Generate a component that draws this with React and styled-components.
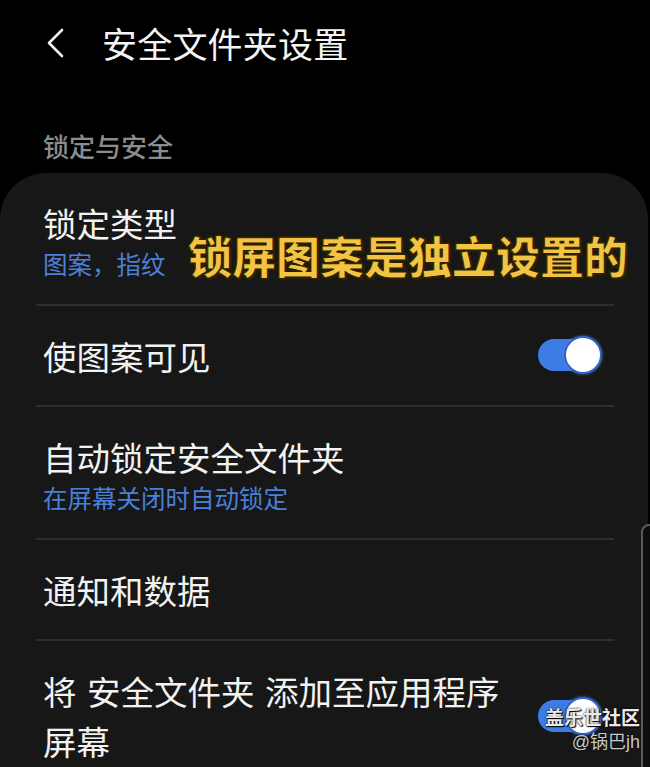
import styled, { createGlobalStyle } from "styled-components";

const GlobalStyle = createGlobalStyle`
	html, body {
		margin: 0;
		padding: 0;
		background: #000;
		height: 767px;
		overflow: hidden;
	}
	body {
		font-family: "Noto Sans CJK SC", "Noto Sans", sans-serif;
		color: #f2f2f2;
	}
`;

const rows = [
	{ title: "锁定类型", sub: "图案，指纹" },
	{ title: "使图案可见", toggle: true },
	{ title: "自动锁定安全文件夹", sub: "在屏幕关闭时自动锁定" },
	{ title: "通知和数据" },
	{ title: "将 安全文件夹 添加至应用程序屏幕", toggle: true, last: true },
];

const App = () => {
	return (
		<Screen>
			<GlobalStyle />
			<TopBar>
				<BackButton>
					<svg width="22" height="30" viewBox="0 0 22 30">
						<path d="M18 2 L5 15 L18 28" fill="none" stroke="#f2f2f2" strokeWidth="2.6" strokeLinecap="round" strokeLinejoin="round" />
					</svg>
				</BackButton>
				<PageTitle>安全文件夹设置</PageTitle>
			</TopBar>

			<SectionHeader>锁定与安全</SectionHeader>

			<Card>
				{rows.map((row) => (
					<Row key={row.title} last={row.last}>
						<RowText>
							<RowTitle>{row.title}</RowTitle>
							{row.sub && <RowSub>{row.sub}</RowSub>}
						</RowText>
						{row.toggle && (
							<Switch>
								<Thumb />
							</Switch>
						)}
					</Row>
				))}
			</Card>

			<Caption>锁屏图案是独立设置的</Caption>
			<ScrollTrack />
			<Watermark>
				<WatermarkName>盖乐世社区</WatermarkName>
				<WatermarkUser>@锅巴jh</WatermarkUser>
			</Watermark>
		</Screen>
	);
};

export default App;

const Screen = styled.div`
	position: relative;
	width: 650px;
	height: 767px;
	overflow: hidden;
	background: #000;
`;

const TopBar = styled.div`
	display: flex;
	align-items: center;
	height: 86px;
	padding-left: 44px;
	gap: 36px;
`;

const BackButton = styled.div`
	display: flex;
	align-items: center;
	width: 22px;
	height: 30px;
	margin-top: -1px;
`;

const PageTitle = styled.h1`
	margin: 0;
	font-size: 35px;
	font-weight: 400;
	line-height: 44px;
	color: #f4f4f4;
	letter-spacing: 0.2px;
`;

const SectionHeader = styled.div`
	padding: 42px 0 9px 43px;
	font-size: 26px;
	line-height: 36px;
	font-weight: 500;
	color: #8c8c8c;
`;

const Card = styled.div`
	width: 648px;
	background: #171717;
	border-radius: 46px 46px 0 0;
	padding: 0 34px 0 36px;
	box-sizing: border-box;
`;

const Row = styled.div`
	display: flex;
	align-items: center;
	justify-content: space-between;
	padding: 25px 14px 25px 7px;
	border-bottom: ${(p) => (p.last ? "none" : "2px solid #2e2e2e")};
`;

const RowText = styled.div`
	display: flex;
	flex-direction: column;
	max-width: 470px;
`;

const RowTitle = styled.div`
	font-size: 33.5px;
	line-height: 49.5px;
	color: #f2f2f2;
	word-spacing: 3px;
`;

const RowSub = styled.div`
	font-size: 24.5px;
	line-height: 31px;
	color: #4a80d8;
`;

const Switch = styled.div`
	position: relative;
	flex-shrink: 0;
	width: 62px;
	height: 32px;
	border-radius: 16px;
	background: #3d7be5;
`;

const Thumb = styled.div`
	position: absolute;
	right: -2px;
	top: -3px;
	width: 34px;
	height: 34px;
	border-radius: 50%;
	background: #fff;
	border: 2px solid #2f64c9;
	box-shadow: 0 0 3px rgba(90, 140, 240, 0.8);
`;

const Caption = styled.div`
	position: absolute;
	left: 188px;
	top: 229px;
	font-size: 44px;
	line-height: 52px;
	font-weight: 900;
	color: #f3c343;
	-webkit-text-stroke: 1px #2b2000;
	text-shadow: 2px 2px 0 #2a1e00, -1px -1px 0 #2a1e00, 1px -1px 0 #2a1e00, -1px 1px 0 #2a1e00;
`;

const ScrollTrack = styled.div`
	position: absolute;
	left: 641px;
	top: 524px;
	width: 20px;
	height: 260px;
	border: 2px solid #5a5a5a;
	border-radius: 8px 0 0 0;
	background: #0e0e0e;
`;

const Watermark = styled.div`
	position: absolute;
	right: 10px;
	top: 703px;
	display: flex;
	flex-direction: column;
	align-items: flex-end;
`;

const WatermarkName = styled.div`
	font-size: 19px;
	line-height: 28px;
	font-weight: 700;
	color: #eaeaea;
	text-shadow: 0 0 2px #000, 1px 1px 1px #000;
`;

const WatermarkUser = styled.div`
	font-family: "Liberation Sans", "Noto Sans CJK SC", sans-serif;
	font-size: 18px;
	line-height: 22px;
	color: #c8c8c8;
	text-shadow: 0 0 2px #000;
`;
